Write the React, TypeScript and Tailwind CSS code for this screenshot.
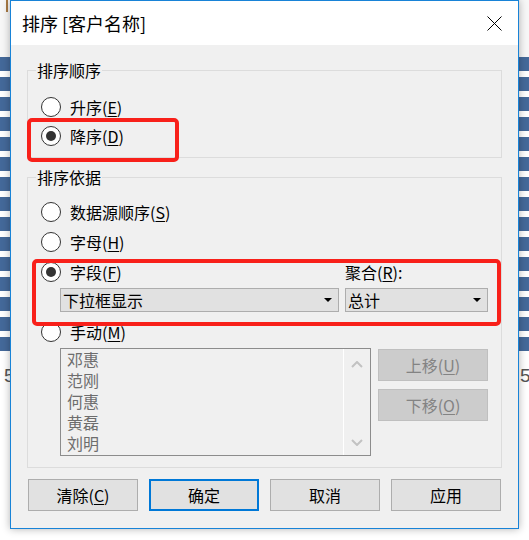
import React from 'react';

const Bars = () => (
  <div className="flex flex-col gap-[6px]">
    {Array.from({ length: 15 }).map((_, i) => (
      <div key={i} className="h-[14px] bg-[#44699a]" />
    ))}
  </div>
);

const Radio = ({ checked }: { checked?: boolean }) => (
  <span className="flex h-[20px] w-[20px] shrink-0 items-center justify-center rounded-full border border-[#333333] bg-white">
    {checked && <span className="h-[10px] w-[10px] rounded-full bg-[#333333]" />}
  </span>
);

const RadioRow = ({
  checked,
  className,
  children,
}: {
  checked?: boolean;
  className?: string;
  children: React.ReactNode;
}) => (
  <div className={`flex items-center gap-[9px] ${className ?? ''}`}>
    <Radio checked={checked} />
    <span className="leading-[20px]">{children}</span>
  </div>
);

const Key = ({ children }: { children: React.ReactNode }) => (
  <span className="underline underline-offset-2">{children}</span>
);

const Caret = () => (
  <svg width="8" height="4" viewBox="0 0 8 4">
    <polygon points="0,0 8,0 4,4" fill="#000" />
  </svg>
);

const Select = ({ label, className }: { label: string; className: string }) => (
  <div
    className={`flex h-[24px] items-center justify-between border border-[#adadad] bg-[#e1e1e1] pl-[2px] pr-[6px] leading-[20px] ${className}`}
  >
    <span>{label}</span>
    <Caret />
  </div>
);

const Button = ({ children, primary }: { children: React.ReactNode; primary?: boolean }) => (
  <div
    className={`flex h-[32px] w-[110px] items-center justify-center bg-[#e1e1e1] leading-[20px] ${
      primary ? 'border-2 border-[#0078d7]' : 'border border-[#adadad]'
    }`}
  >
    {children}
  </div>
);

const DisabledButton = ({ children }: { children: React.ReactNode }) => (
  <div className="flex h-[32px] w-[110px] items-center justify-center border border-[#bfbfbf] bg-[#cccccc] leading-[20px] text-[#838383]">
    {children}
  </div>
);

const names = ['邓惠', '范刚', '何惠', '黄磊', '刘明'];

const Dialog = () => (
  <div className="relative z-10 flex h-[529px] w-[509px] shrink-0 flex-col border border-[#1883d7] bg-[#f0f0f0] text-[16px] shadow-[0_0_8px_rgba(0,0,0,0.3)]">
    {/* title bar */}
    <div className="flex h-[44px] items-center justify-between bg-white pl-[11px] pr-[16px]">
      <span className="text-[18px] leading-[24px]">排序 [客户名称]</span>
      <svg width="15" height="15" viewBox="0 0 15 15">
        <path d="M0.5 0.5 L14.5 14.5 M14.5 0.5 L0.5 14.5" stroke="#000" strokeWidth="1" />
      </svg>
    </div>

    <div className="flex flex-col px-[16px] pt-[15px]">
      <fieldset className="border border-[#dcdcdc] px-[8px] pb-[7px]">
        <legend className="px-[1px] leading-[20px]">排序顺序</legend>
        <div className="flex flex-col pl-[5px] pt-[12px]">
          <RadioRow className="h-[29px]">
            升序(<Key>E</Key>)
          </RadioRow>
          <RadioRow className="h-[29px]" checked>
            降序(<Key>D</Key>)
          </RadioRow>
        </div>
      </fieldset>

      <fieldset className="mt-[9px] border border-[#dcdcdc] px-[8px] pb-[11px]">
        <legend className="px-[1px] leading-[20px]">排序依据</legend>
        <div className="flex flex-col pl-[5px] pt-[10px]">
          <RadioRow className="h-[30px]">
            数据源顺序(<Key>S</Key>)
          </RadioRow>
          <RadioRow className="h-[30px]">
            字母(<Key>H</Key>)
          </RadioRow>
          <div className="flex h-[30px] items-center">
            <RadioRow className="w-[304px]" checked>
              字段(<Key>F</Key>)
            </RadioRow>
            <span className="leading-[20px]">
              聚合(<Key>R</Key>):
            </span>
          </div>
          <div className="mt-[1px] flex gap-[6px] pl-[19px]">
            <Select label="下拉框显示" className="w-[279px]" />
            <Select label="总计" className="w-[143px]" />
          </div>
          <RadioRow className="mt-[5px] h-[30px]">
            手动(<Key>M</Key>)
          </RadioRow>
          <div className="mt-[1px] flex items-start gap-[7px] pl-[19px]">
            <div className="flex h-[108px] w-[311px] border border-[#8c8c8c] bg-[#f0f0f0]">
              <div className="flex flex-1 flex-col pl-[6px] leading-[21px] text-[#6d6d6d]">
                {names.map((n) => (
                  <span key={n}>{n}</span>
                ))}
              </div>
              <div className="flex w-[27px] flex-col items-center justify-between border-l border-white pb-[9px] pt-[12px]">
                <svg width="12" height="7" viewBox="0 0 12 7">
                  <path d="M1 6 L6 1 L11 6" fill="none" stroke="#c2c2c2" strokeWidth="2" />
                </svg>
                <svg width="12" height="7" viewBox="0 0 12 7">
                  <path d="M1 1 L6 6 L11 1" fill="none" stroke="#c2c2c2" strokeWidth="2" />
                </svg>
              </div>
            </div>
            <div className="mt-[1px] flex flex-col gap-[8px]">
              <DisabledButton>
                上移(<Key>U</Key>)
              </DisabledButton>
              <DisabledButton>
                下移(<Key>O</Key>)
              </DisabledButton>
            </div>
          </div>
        </div>
      </fieldset>

      <div className="mt-[11px] flex gap-[11px] pl-[1px]">
        <Button>
          清除(<Key>C</Key>)
        </Button>
        <Button primary>确定</Button>
        <Button>取消</Button>
        <Button>应用</Button>
      </div>
    </div>

    {/* annotation boxes */}
    <div className="pointer-events-none absolute left-[16px] top-[117px] h-[44px] w-[152px] rounded-[5px] border-[4px] border-[#f8201a]" />
    <div className="pointer-events-none absolute left-[21px] top-[258px] h-[67px] w-[469px] rounded-[5px] border-[4px] border-[#f8201a]" />
  </div>
);

export default function App() {
  return (
    <div className="flex h-[540px] w-[529px] overflow-hidden bg-white font-['Noto_Sans_CJK_SC',sans-serif] text-black">
      <div className="flex w-[10px] shrink-0 flex-col overflow-hidden">
        <div className="h-[57px] bg-[#f7f7f7]">
          <div className="ml-[6px] h-[12px] w-[2px] bg-[#a87a44]" />
        </div>
        <Bars />
        <div className="mt-[13px] whitespace-nowrap pl-[4px] font-['Liberation_Sans',sans-serif] text-[19px] leading-[24px] text-[#555555]">
          5
        </div>
      </div>
      <Dialog />
      <div className="flex w-[10px] shrink-0 flex-col overflow-hidden">
        <div className="h-[57px] bg-[#f7f7f7]" />
        <Bars />
        <div className="mt-[13px] whitespace-nowrap pl-[1px] font-['Liberation_Sans',sans-serif] text-[19px] leading-[24px] text-[#555555]">
          5
        </div>
      </div>
    </div>
  );
}
